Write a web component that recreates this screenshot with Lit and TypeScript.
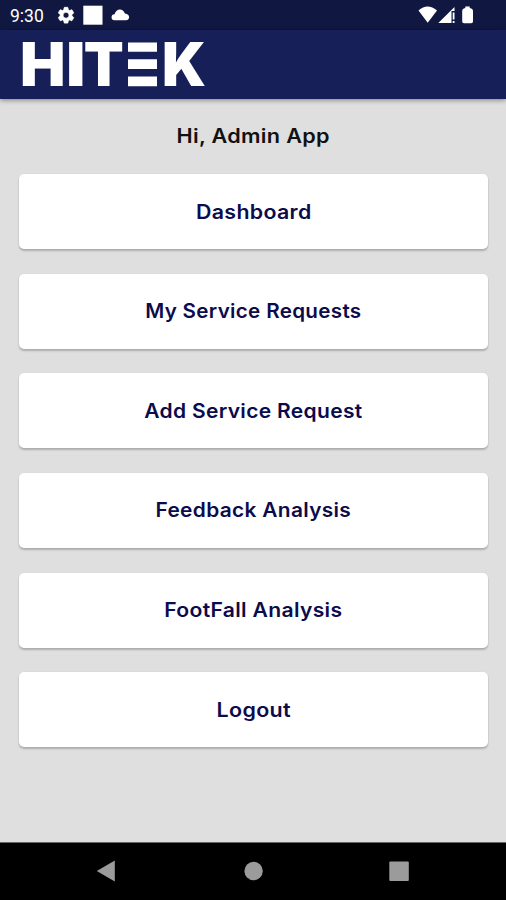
import { LitElement, html, css } from "lit";
import { customElement } from "lit/decorators.js";
import { styleMap } from "lit/directives/style-map.js";

const MENU = [
  { label: "Dashboard", stretch: 1.095 },
  { label: "My Service Requests", stretch: 1.057 },
  { label: "Add Service Request", stretch: 1.077 },
  { label: "Feedback Analysis", stretch: 1.071 },
  { label: "FootFall Analysis", stretch: 1.082 },
  { label: "Logout", stretch: 1.1 },
];

@customElement("status-bar")
class StatusBar extends LitElement {
  static styles = css`
    :host { display: flex; justify-content: space-between; height: 30px; background: #101842; color: #fff; }
    .clock { width: 56px; padding-left: 10px; box-sizing: border-box; font: 400 17.5px/32px Roboto, sans-serif; letter-spacing: 0; }
    .left { display: flex; }
    svg { display: block; fill: #fff; }
  `;
  render() {
    return html`
      <div class="left">
        <span class="clock">9:30</span>
        <svg width="80" height="30" viewBox="56 0 80 30">
          <g transform="translate(56.2 5.4) scale(.82)" stroke="#fff" stroke-width="0.9">
            <path d="M19.14 12.94c.04-.3.06-.61.06-.94 0-.32-.02-.64-.07-.94l2.03-1.58c.18-.14.23-.41.12-.61l-1.92-3.32c-.12-.22-.37-.29-.59-.22l-2.39.96c-.5-.38-1.03-.7-1.62-.94l-.36-2.54c-.04-.24-.24-.41-.48-.41h-3.84c-.24 0-.43.17-.47.41l-.36 2.54c-.59.24-1.13.57-1.62.94l-2.39-.96c-.22-.08-.47 0-.59.22L2.74 8.87c-.12.21-.08.47.12.61l2.03 1.58c-.05.3-.09.63-.09.94s.02.64.07.94l-2.03 1.58c-.18.14-.23.41-.12.61l1.92 3.32c.12.22.37.29.59.22l2.39-.96c.5.38 1.03.7 1.62.94l.36 2.54c.05.24.24.41.48.41h3.84c.24 0 .44-.17.47-.41l.36-2.54c.59-.24 1.13-.56 1.62-.94l2.39.96c.22.08.47 0 .59-.22l1.92-3.32c.12-.22.07-.47-.12-.61l-2.01-1.58zM12 15.6c-1.98 0-3.6-1.62-3.6-3.6s1.62-3.6 3.6-3.6 3.6 1.62 3.6 3.6-1.62 3.6-3.6 3.6z" />
          </g>
          <rect x="83.3" y="5.7" width="19.2" height="19" />
          <path d="M114.500 20.200A3 3 0 0 1 114.600 14.200C116 8.200 123 7.700 124.900 13.400C130.500 13.700 130.200 20.200 126 20.200Z" />
        </svg>
      </div>
      <svg width="106" height="30" viewBox="400 0 106 30">
        <path d="M418.500 10.500Q427.500 2.500 437 10.500L427.700 22.700Z" />
        <path d="M438.300 23L454.500 7V11H451.500V23Z" />
        <path d="M452.700 12.500H454.500V19.500H452.700ZM452.700 21H454.500V23H452.700Z" />
        <path d="M465.300 6.500H469.700V8Q473 8.500 473 11V21.500Q473 23.300 471.200 23.300H464Q462.200 23.300 462.200 21.500V11Q462.200 8.500 465.300 8Z" />
      </svg>
    `;
  }
}

@customElement("brand-bar")
class BrandBar extends LitElement {
  static styles = css`
    :host { display: block; height: 69px; background: #171f58; box-shadow: 0 1px 5px rgba(0, 0, 0, 0.45); }
    svg { display: block; fill: #fff; overflow: visible; }
    text { font: 900 60px Inter, sans-serif; }
  `;
  render() {
    return html`
      <svg width="240" height="69" viewBox="0 30 240 69" aria-label="HITEK">
        <text x="20" y="86.300" textLength="45.500" lengthAdjust="spacingAndGlyphs">H</text>
        <text x="66" y="86.300" textLength="19.500" lengthAdjust="spacingAndGlyphs">I</text>
        <text x="83.800" y="86.300" textLength="40" lengthAdjust="spacingAndGlyphs">T</text>
        <path d="M128 42.600H157V51.800H128ZM128 59.300H157V69H128ZM128 76.500H157V86.300H128Z" />
        <text x="162" y="86.300" textLength="44" lengthAdjust="spacingAndGlyphs">K</text>
      </svg>
    `;
  }
}

@customElement("nav-bar")
class NavBar extends LitElement {
  static styles = css`
    :host { display: block; height: 58px; background: #000; border-top: 1px solid #666; box-sizing: border-box; }
    svg { display: block; fill: #9b9b9b; }
  `;
  render() {
    return html`
      <svg width="506" height="57" viewBox="0 843 506 57">
        <path d="M96.800 871L114.800 860.500V881.500Z" />
        <circle cx="253.600" cy="871" r="9.200" />
        <rect x="389.300" y="861.500" width="19.500" height="19.500" rx="1" />
      </svg>
    `;
  }
}

@customElement("app-root")
class AppRoot extends LitElement {
  static styles = css`
    :host { display: flex; flex-direction: column; height: 900px; background: #dfdfdf; font-family: Inter, sans-serif; }
    main { flex: 1; padding: 0 18px 0 19px; }
    h1 { margin: 0; height: 75.200px; font-size: 19.500px; font-weight: 600; line-height: 75px; letter-spacing: 0.300px; text-align: center; color: #111; }
    .title { display: inline-block; transform: scaleX(1.109); }
    .menu { display: grid; gap: 24.900px; }
    .item { display: block; height: 74.750px; padding: 1px 0 0; border: 0; border-radius: 5px; background: #fff; box-shadow: 0 2px 2px rgba(0, 0, 0, 0.22), 0 0 2px rgba(0, 0, 0, 0.06); font: 600 19.500px/73px Inter, sans-serif; letter-spacing: 0.300px; color: #0c0b4c; text-align: center; }
    .label { display: inline-block; }
  `;
  render() {
    return html`
      <status-bar></status-bar>
      <brand-bar></brand-bar>
      <main>
        <h1><span class="title">Hi, Admin App</span></h1>
        <div class="menu">
          ${MENU.map(
            (m) => html`<button class="item"><span class="label" style=${styleMap({ transform: `scaleX(${m.stretch})` })}>${m.label}</span></button>`
          )}
        </div>
      </main>
      <nav-bar></nav-bar>
    `;
  }
}
